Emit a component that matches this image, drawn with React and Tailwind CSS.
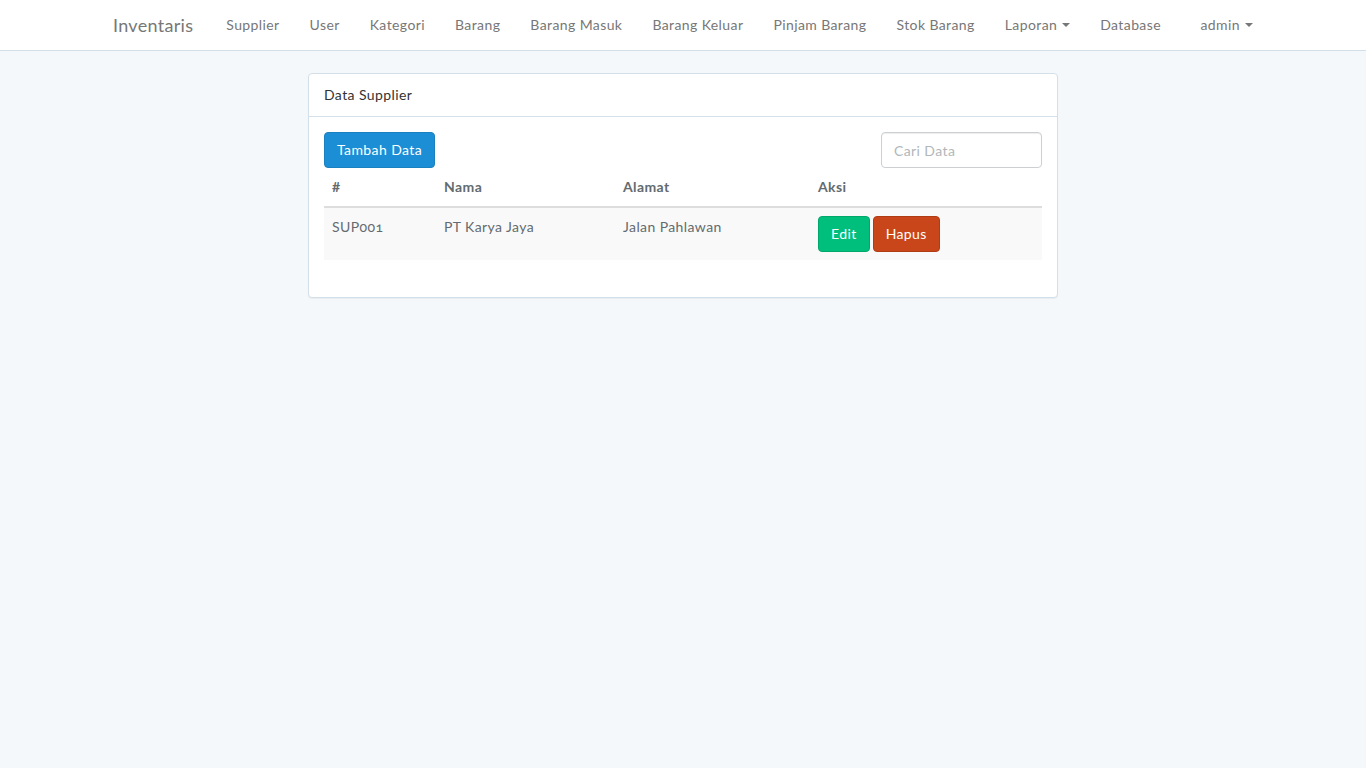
import React from 'react';

// Halaman data supplier: navbar atas + panel tabel supplier.
const menu = ['Supplier', 'User', 'Kategori', 'Barang', 'Barang Masuk', 'Barang Keluar', 'Pinjam Barang', 'Stok Barang'];

const suppliers = [
  { kode: 'SUP001', nama: 'PT Karya Jaya', alamat: 'Jalan Pahlawan' },
];

function Caret() {
  return (
    <span className="inline-block ml-[5px] w-0 h-0 border-t-[4px] border-t-[#777] border-x-[4px] border-x-transparent align-middle" />
  );
}

export default function App() {
  return (
    <div className="min-h-screen bg-[#f5f8fa] text-[#636b6f] text-[14px] leading-[1.6] tracking-[0.4px] font-['Lato','Open_Sans',sans-serif]">
      {/* Navbar */}
      <nav className="h-[51px] bg-white border-b border-[#d3e0e9]">
        <div className="w-[1170px] mx-auto h-[50px] flex items-center px-[15px]">
          <span className="text-[18px] text-[#777] pr-[18px] tracking-[0.3px]">Inventaris</span>
          <ul className="flex items-center">
            {menu.map((m) => (
              <li key={m} className="px-[15px] text-[#777]">{m}</li>
            ))}
            <li className="px-[15px] text-[#777] flex items-center">Laporan<Caret /></li>
            <li className="px-[15px] text-[#777]">Database</li>
          </ul>
          <div className="ml-auto text-[#777] flex items-center">admin<Caret /></div>
        </div>
      </nav>

      {/* Panel */}
      <div className="w-[750px] mx-auto mt-[22px]">
        <div className="bg-white border border-[#d3e0e9] rounded-[4px] shadow-[0_1px_1px_rgba(0,0,0,0.05)]">
          <div className="px-[15px] py-[10px] text-[#333] border-b border-[#d3e0e9]">Data Supplier</div>
          <div className="p-[15px]">
            <div className="flex items-center justify-between">
              <button className="h-[36px] px-[12px] rounded-[4px] bg-[#1b8ed6] border border-[#1a80c0] text-white">Tambah Data</button>
              <input
                placeholder="Cari Data"
                className="w-[161px] h-[36px] px-[12px] rounded-[4px] border border-[#ccd0d2] shadow-[inset_0_1px_1px_rgba(0,0,0,0.075)] placeholder:text-[#b1b7ba] outline-none"
              />
            </div>
            <table className="w-full mb-[22px] border-collapse leading-[22px]">
              <thead>
                <tr className="border-b-2 border-[#ddd] text-left">
                  <th className="w-[112px] p-[8px] font-bold">#</th>
                  <th className="w-[179px] p-[8px] font-bold">Nama</th>
                  <th className="w-[195px] p-[8px] font-bold">Alamat</th>
                  <th className="p-[8px] font-bold">Aksi</th>
                </tr>
              </thead>
              <tbody>
                {suppliers.map((s) => (
                  <tr key={s.kode} className="bg-[#f9f9f9] align-top">
                    <td className="p-[8px] oldstyle-nums">{s.kode}</td>
                    <td className="p-[8px]">{s.nama}</td>
                    <td className="p-[8px]">{s.alamat}</td>
                    <td className="p-[8px]">
                      <div className="flex gap-[3px]">
                        <button className="h-[36px] px-[12px] rounded-[4px] bg-[#00bf7d] border border-[#00a86c] text-white">Edit</button>
                        <button className="h-[36px] px-[12px] rounded-[4px] bg-[#c8461a] border border-[#b03c14] text-white">Hapus</button>
                      </div>
                    </td>
                  </tr>
                ))}
              </tbody>
            </table>
          </div>
        </div>
      </div>
    </div>
  );
}
